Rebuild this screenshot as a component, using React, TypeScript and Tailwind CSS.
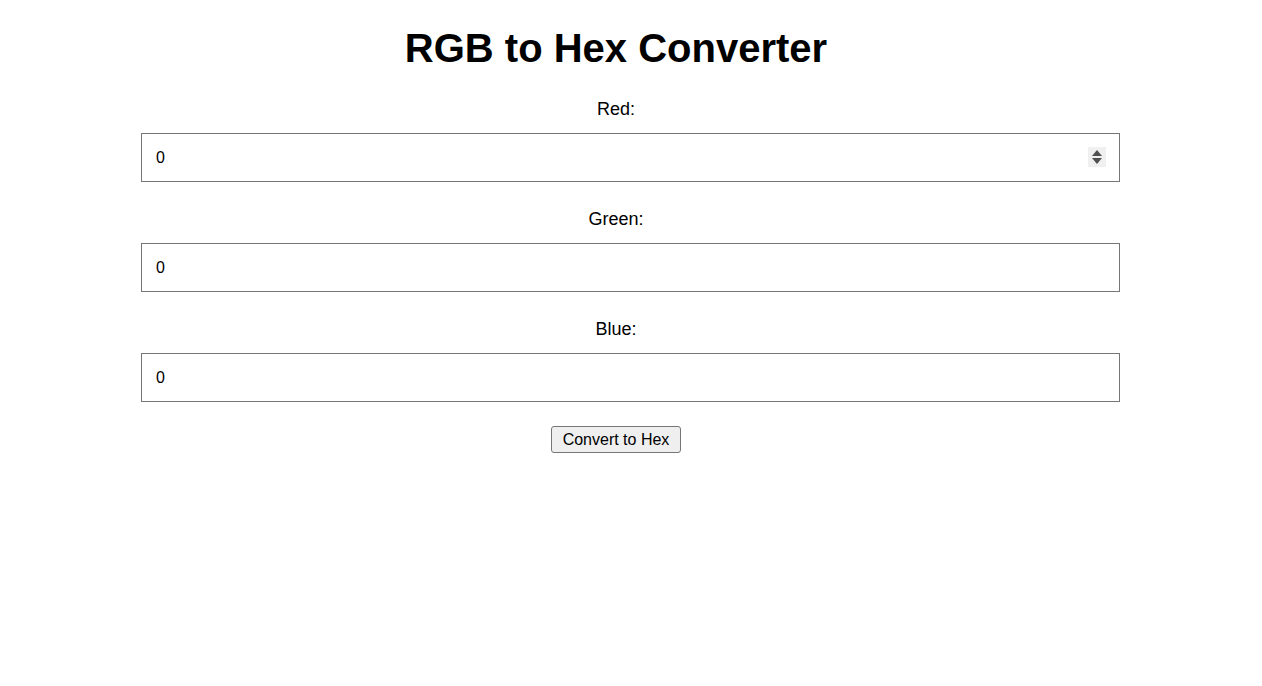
import React from "react"

const fields = ["Red", "Green", "Blue"]

function Spinner() {
  return (
    <div className="absolute right-[14px] top-[14px] flex h-[20px] w-[18px] flex-col items-center justify-center gap-[2px] bg-[#f0f0f0]">
      <svg width="10" height="6" viewBox="0 0 10 6">
        <path d="M5 0 L10 6 L0 6 Z" fill="#505050" />
      </svg>
      <svg width="10" height="6" viewBox="0 0 10 6">
        <path d="M0 0 L10 0 L5 6 Z" fill="#505050" />
      </svg>
    </div>
  )
}

export default function App() {
  return (
    <div className="min-h-screen bg-white text-black" style={{ fontFamily: '"Liberation Sans", Arial, sans-serif' }}>
      <div className="ml-[141px] flex w-[950px] flex-col items-center">
        <h1 className="mt-[25px] text-[40px] font-bold leading-[46px]">RGB to Hex Converter</h1>
        <div className="mt-[1px] flex w-full flex-col">
          {fields.map((name) => (
            <div key={name} className="flex flex-col items-center">
              <label className="mt-[26.5px] text-[18px] leading-[21px]">{name}:</label>
              <div className="relative mt-[13.5px] self-start">
                <input
                  type="text"
                  defaultValue="0"
                  className="h-[49px] w-[979px] border border-[#767676] bg-white px-[14px] text-[16px] outline-none"
                />
                {name === "Red" && <Spinner />}
              </div>
            </div>
          ))}
          <div className="mt-[24px] flex justify-center">
            <button className="h-[27px] rounded-[3px] border border-[#767676] bg-[#efefef] px-[11px] text-[16px] leading-[20px]">
              Convert to Hex
            </button>
          </div>
        </div>
      </div>
    </div>
  )
}
